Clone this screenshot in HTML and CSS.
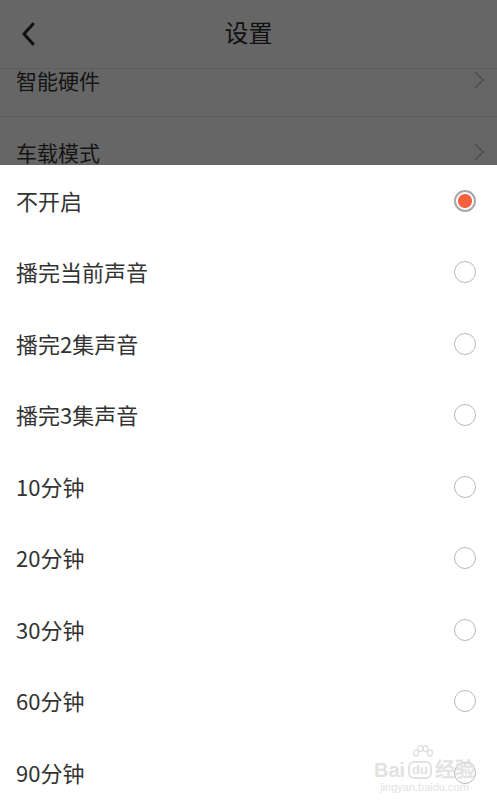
FILE: index.html
```html
<!DOCTYPE html>
<html lang="zh-CN">
<head>
    <meta charset="UTF-8">
    <meta name="viewport" content="width=device-width, initial-scale=1.0">
    <title>设置</title>
    <link rel="stylesheet" href="styles.css">
</head>
<body>
    <div class="screen">
        <div class="dim">
            <div class="topbar">
                <svg class="back" width="14" height="24" viewBox="0 0 14 24">
                    <path d="M12 2 L3 12 L12 22" fill="none" stroke="#111" stroke-width="3" stroke-linecap="round" stroke-linejoin="round"/>
                </svg>
                <div class="title">设置</div>
            </div>
            <div class="behind-row first">
                <span>智能硬件</span>
                <svg width="10" height="18" viewBox="0 0 10 18"><path d="M1 1 L9 9 L1 17" fill="none" stroke="#4c4c4c" stroke-width="1.5"/></svg>
            </div>
            <div class="behind-row last">
                <span>车载模式</span>
                <svg width="10" height="18" viewBox="0 0 10 18"><path d="M1 1 L9 9 L1 17" fill="none" stroke="#4c4c4c" stroke-width="1.5"/></svg>
            </div>
        </div>

        <div class="sheet">
            <div class="option"><span>不开启</span><i class="radio checked"></i></div>
            <div class="option"><span>播完当前声音</span><i class="radio"></i></div>
            <div class="option"><span>播完2集声音</span><i class="radio"></i></div>
            <div class="option"><span>播完3集声音</span><i class="radio"></i></div>
            <div class="option"><span>10分钟</span><i class="radio"></i></div>
            <div class="option"><span>20分钟</span><i class="radio"></i></div>
            <div class="option"><span>30分钟</span><i class="radio"></i></div>
            <div class="option"><span>60分钟</span><i class="radio"></i></div>
            <div class="option"><span>90分钟</span><i class="radio"></i></div>
        </div>

        <div class="watermark">
            <svg class="wm-paw" width="22" height="16" viewBox="0 0 22 16">
                <g fill="none" stroke="#e2e2e2" stroke-width="1.5">
                    <ellipse cx="4" cy="8" rx="2.5" ry="3"/>
                    <ellipse cx="8.5" cy="3.5" rx="2.5" ry="3"/>
                    <ellipse cx="13.5" cy="3.5" rx="2.5" ry="3"/>
                    <ellipse cx="18" cy="8" rx="2.5" ry="3"/>
                </g>
            </svg>
            <div class="wm-logo"><span>Bai</span><span class="wm-du">du</span><span>经验</span></div>
            <div class="wm-url">jingyan.baidu.com</div>
        </div>
    </div>
</body>
</html>
```

FILE: styles.css
```css
body {
    margin: 0;
    font-family: "Noto Sans CJK SC", "Noto Sans", sans-serif;
    background: #fff;
}
.screen {
    position: relative;
    width: 497px;
    height: 802px;
    overflow: hidden;
    display: flex;
    flex-direction: column;
}
.dim {
    background: #666;
}
.topbar {
    height: 68px;
    border-bottom: 1px solid #5c5c5c;
    display: flex;
    align-items: center;
    position: relative;
}
.back {
    margin-left: 21px;
    margin-top: -1px;
}
.title {
    position: absolute;
    left: 0;
    right: 0;
    top: 15px;
    text-align: center;
    font-size: 24px;
    line-height: 34px;
    color: #111;
    pointer-events: none;
}
.behind-row {
    height: 48px;
    box-sizing: border-box;
    padding: 0 13px 0 16px;
    display: flex;
    justify-content: space-between;
    align-items: flex-start;
    font-size: 21px;
    line-height: 22px;
    color: #141414;
}
.behind-row.first {
    border-bottom: 1px solid #5c5c5c;
}
.behind-row.last {
    padding-top: 24px;
}
.behind-row svg {
    margin-top: 2px;
}
.sheet {
    flex: 1;
    background: #fff;
}
.option {
    height: 71.5px;
    display: flex;
    align-items: center;
    justify-content: space-between;
    padding: 0 21px 0 16px;
    font-size: 22px;
    line-height: 28px;
    color: #333;
}
.option span {
    margin-top: -2px;
}
.radio {
    width: 22px;
    height: 22px;
    box-sizing: border-box;
    border: 1.5px solid #b8b8b8;
    border-radius: 50%;
    background: #fff;
}
.radio.checked {
    border: 2px solid #a8a8a8;
    background: radial-gradient(circle, #f5603e 0, #f5603e 6.5px, #fff 7.5px);
}
.watermark {
    position: absolute;
    right: 22px;
    bottom: 8px;
    color: #e2e2e2;
    font-family: "Liberation Sans", sans-serif;
    text-align: center;
    pointer-events: none;
}
.wm-paw {
    display: block;
    margin: 0 0 -2px 38px;
}
.wm-logo {
    font-size: 20px;
    font-weight: bold;
    line-height: 22px;
    display: flex;
    align-items: center;
}
.wm-du {
    font-size: 13px;
    border: 2px solid #e2e2e2;
    border-radius: 6px;
    padding: 0 2px;
    margin: 0 3px;
    line-height: 14px;
}
.wm-url {
    font-size: 11px;
    line-height: 13px;
}
```
